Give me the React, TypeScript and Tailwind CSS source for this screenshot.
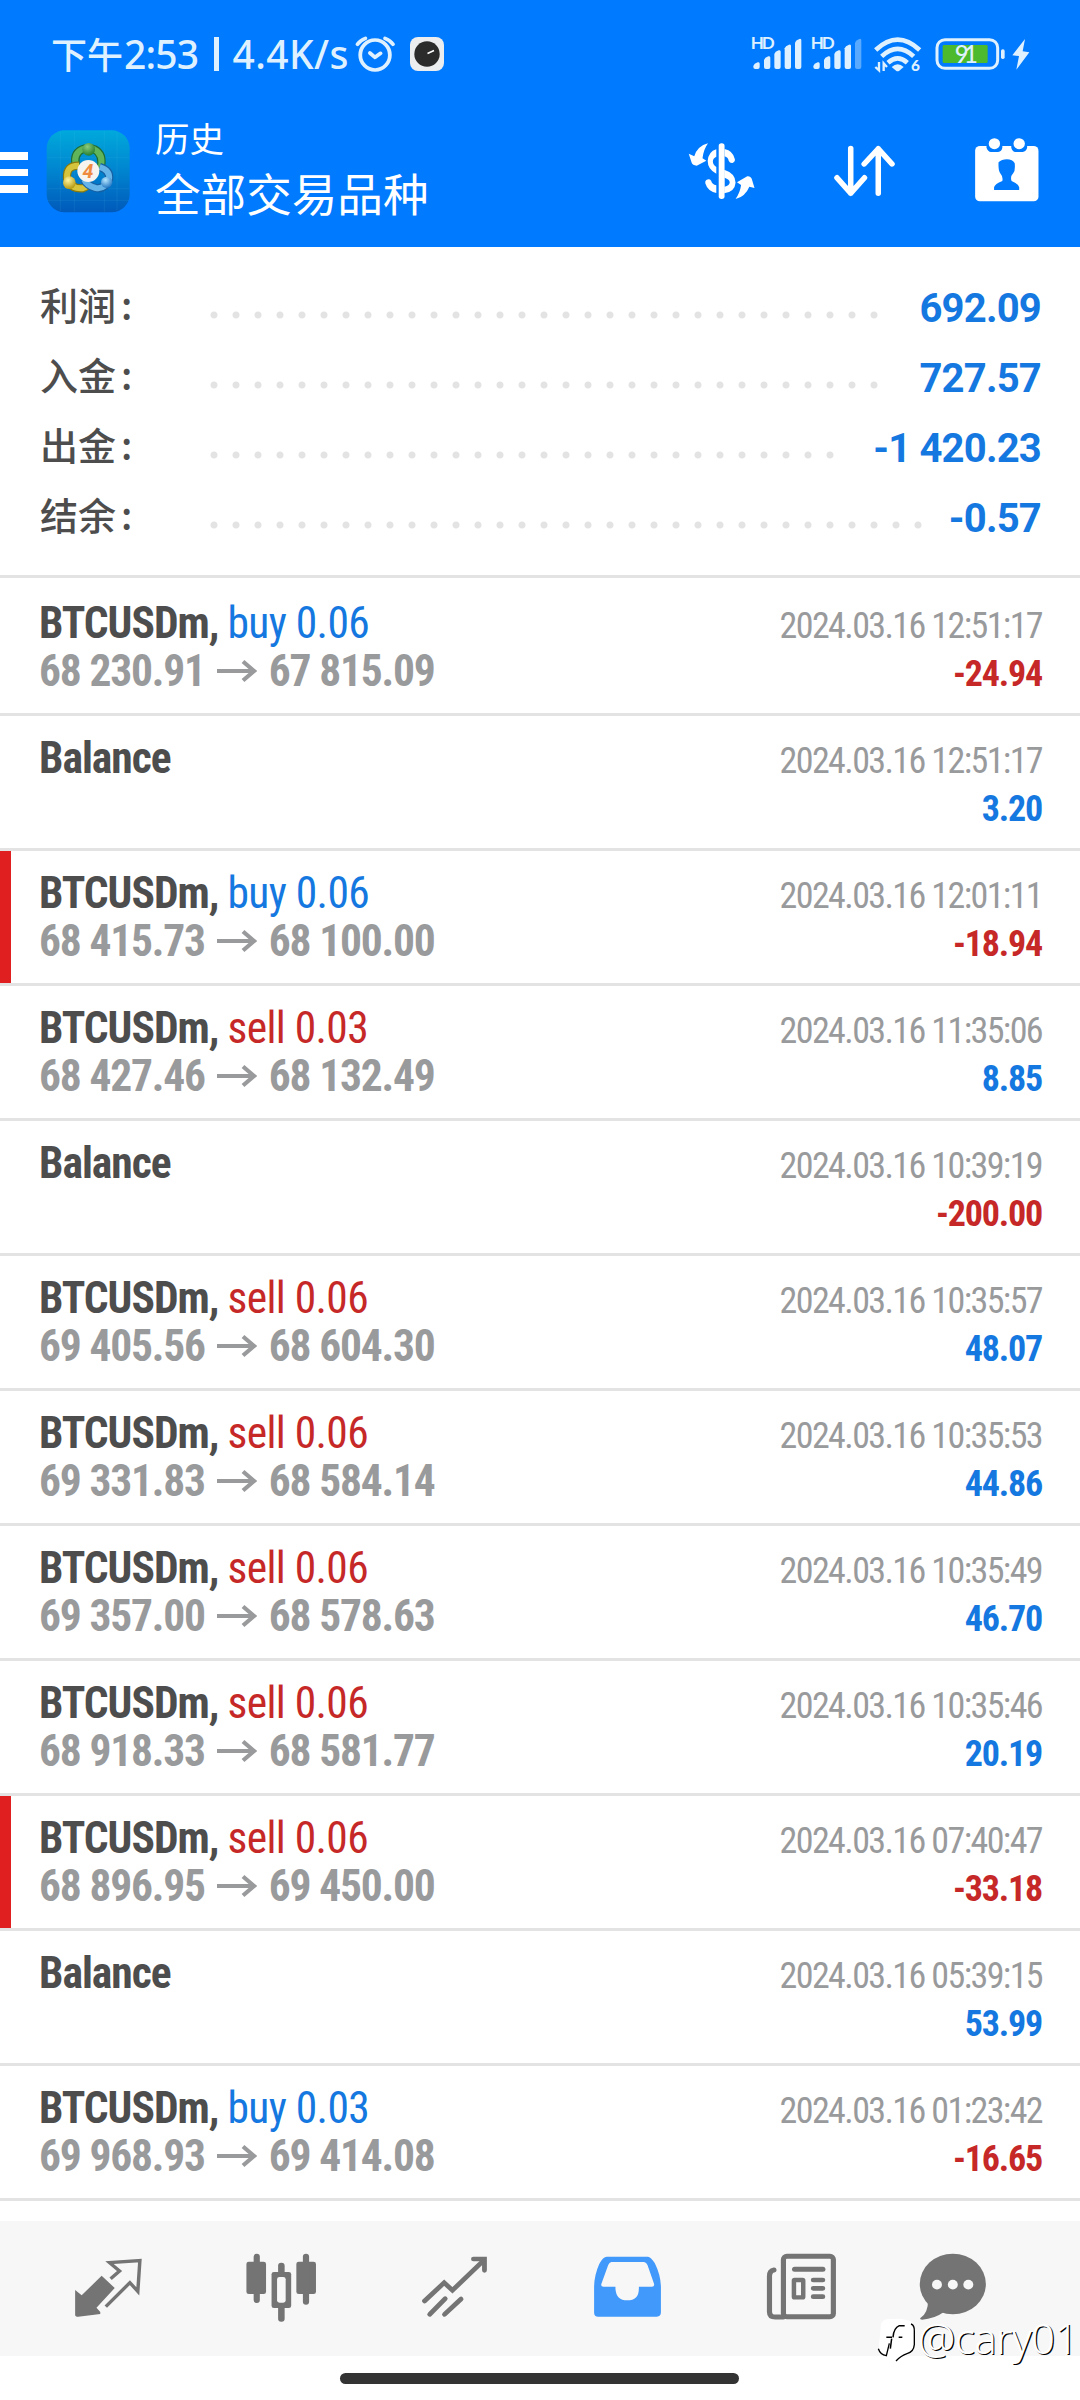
import React from 'react';

const summary = [
  { label: '利润', value: '692.09', dots: 'w-[682px]' },
  { label: '入金', value: '727.57', dots: 'w-[682px]' },
  { label: '出金', value: '-1 420.23', dots: 'w-[638px]' },
  { label: '结余', value: '-0.57', dots: 'w-[726px]' },
];

type Row = { side?: 'buy' | 'sell'; lot?: string; from?: string; to?: string; date: string; value: string; mark?: boolean; loss?: boolean };
const rows: Row[] = [
  { side: 'buy', lot: '0.06', from: '68 230.91', to: '67 815.09', date: '2024.03.16 12:51:17', value: '-24.94', loss: true },
  { date: '2024.03.16 12:51:17', value: '3.20' },
  { side: 'buy', lot: '0.06', from: '68 415.73', to: '68 100.00', date: '2024.03.16 12:01:11', value: '-18.94', mark: true, loss: true },
  { side: 'sell', lot: '0.03', from: '68 427.46', to: '68 132.49', date: '2024.03.16 11:35:06', value: '8.85' },
  { date: '2024.03.16 10:39:19', value: '-200.00', loss: true },
  { side: 'sell', lot: '0.06', from: '69 405.56', to: '68 604.30', date: '2024.03.16 10:35:57', value: '48.07' },
  { side: 'sell', lot: '0.06', from: '69 331.83', to: '68 584.14', date: '2024.03.16 10:35:53', value: '44.86' },
  { side: 'sell', lot: '0.06', from: '69 357.00', to: '68 578.63', date: '2024.03.16 10:35:49', value: '46.70' },
  { side: 'sell', lot: '0.06', from: '68 918.33', to: '68 581.77', date: '2024.03.16 10:35:46', value: '20.19' },
  { side: 'sell', lot: '0.06', from: '68 896.95', to: '69 450.00', date: '2024.03.16 07:40:47', value: '-33.18', mark: true, loss: true },
  { date: '2024.03.16 05:39:15', value: '53.99' },
  { side: 'buy', lot: '0.03', from: '69 968.93', to: '69 414.08', date: '2024.03.16 01:23:42', value: '-16.65', loss: true },
];

function Arrow() {
  return (
    <svg width="40" height="24" viewBox="0 0 40 24" className="-mt-[2px] mr-[12px] ml-[12px]" fill="none" stroke="#999a9c" strokeWidth="4.2">
      <path d="M0 12H37M26 2.5L37 12L26 21.5" />
    </svg>
  );
}

function Signal({ weak }: { weak?: boolean }) {
  const bars = [[42, 128], [74, 110], [105, 92], [136, 75], [167, 58]];
  return (
    <svg width="60" height="50" viewBox="32 30 180 150" fill="#dff1ff">
      <text x="34" y="91" fontSize="51" fontFamily="Lato, sans-serif" fontWeight="700" textLength="72">HD</text>
      {bars.map(([x, y], i) => (
        <path key={x} opacity={weak && i === 4 ? 0.4 : 1} d={`M${x} 144V${y + 13}Q${x + 2} ${y + 6} ${x + 13} ${y + 2}Q${x + 19} ${y} ${x + 19} ${y + 6}V144Q${x + 19} 150 ${x + 13} 150H${x + 6}Q${x} 150 ${x} 144Z`} />
      ))}
    </svg>
  );
}

function Wifi() {
  return (
    <svg width="60" height="50" viewBox="391 30 180 150" fill="none" stroke="#dff1ff" strokeWidth="14">
      <path d="M408 93Q474 31 540 93M426 112Q474 67 522 112M445 131Q474 105 503 131" />
      <path d="M456 144Q474 128 492 144L478 156Q474 158 470 156Z" fill="#dff1ff" stroke="none" />
      <path d="M418 129V154L407 144M432 156V133L442 144" strokeWidth="7" />
      <text x="514" y="157" fontSize="46" fontFamily="Lato, sans-serif" fontWeight="900" fill="#dff1ff" stroke="none">6</text>
    </svg>
  );
}

function Battery() {
  return (
    <svg width="100" height="40" viewBox="580 42 300 120" fill="#dff1ff">
      <rect x="592" y="59" width="182" height="86" rx="24" fill="none" stroke="#dff1ff" strokeWidth="9" />
      <rect x="609" y="75" width="135" height="54" rx="4" fill="#4cba2c" />
      <rect x="784" y="88" width="11" height="29" rx="5" />
      <text x="645" y="128" fontSize="72" fontFamily="Lato, sans-serif" fontWeight="500" textLength="70">91</text>
      <path d="M856 57L818 106L838 108L830 149L869 97L849 94Z" />
    </svg>
  );
}

function Alarm() {
  return (
    <svg width="44.8" height="40" viewBox="1026 100 130 120" preserveAspectRatio="none" fill="none" stroke="#dff1ff" strokeWidth="11" strokeLinecap="round" strokeLinejoin="round">
      <ellipse cx="1090" cy="163" rx="43" ry="45" />
      <path d="M1075 157L1090 170L1106 158" />
      <path d="M1039 131Q1047 119 1062 113M1142 131Q1134 119 1119 113" />
    </svg>
  );
}

function ClockApp() {
  return (
    <div className="ml-[12px] flex h-[34px] w-[34px] items-center justify-center rounded-[8px] bg-[#ecedee]">
      <svg width="26" height="26" viewBox="0 0 26 26">
        <circle cx="13" cy="13" r="12.7" fill="#2b2b2b" />
        <path d="M13.5 12.5L20 9.5" stroke="#fff" strokeWidth="1.5" />
      </svg>
    </div>
  );
}

function Logo() {
  return (
    <svg width="86" height="84" viewBox="134 56 258 252">
      <defs>
        <linearGradient id="sky" x1="0" y1="0" x2="0" y2="1">
          <stop offset="0" stopColor="#00a9dc" />
          <stop offset="0.5" stopColor="#0084cf" />
          <stop offset="1" stopColor="#0059ba" />
        </linearGradient>
        <radialGradient id="green" cx="0.4" cy="0.3" r="0.7"><stop offset="0" stopColor="#8ccb7c" /><stop offset="1" stopColor="#267f30" /></radialGradient>
        <radialGradient id="gold" cx="0.4" cy="0.3" r="0.7"><stop offset="0" stopColor="#fff6a0" /><stop offset="1" stopColor="#b69a11" /></radialGradient>
        <radialGradient id="azure" cx="0.4" cy="0.3" r="0.7"><stop offset="0" stopColor="#b5e6ff" /><stop offset="1" stopColor="#2478c4" /></radialGradient>
      </defs>
      <rect x="139" y="60" width="249" height="246" rx="54" fill="url(#sky)" />
      <path d="M222 62V304M180 64V302M312 62V304M350 66V300M141 142H386M141 235H386M141 270H386" stroke="#5cc7ee" strokeOpacity="0.22" strokeWidth="1.5" />
      <g fill="none">
        <path d="M230 176Q214 132 246 117Q264 110 282 117Q312 132 300 176" stroke="#1f6d33" strokeWidth="25" />
        <path d="M230 176Q214 132 246 117Q264 110 282 117Q312 132 300 176" stroke="#60b45a" strokeWidth="18" />
        <path d="M236 166Q198 164 200 203Q210 236 246 234Q262 230 268 218" stroke="#8a7a0d" strokeWidth="25" />
        <path d="M236 166Q198 164 200 203Q210 236 246 234Q262 230 268 218" stroke="#d6c43c" strokeWidth="18" />
        <path d="M298 170Q330 180 326 206Q314 238 286 233Q260 226 252 208" stroke="#1661a4" strokeWidth="25" />
        <path d="M298 170Q330 180 326 206Q314 238 286 233Q260 226 252 208" stroke="#66b4e8" strokeWidth="18" />
      </g>
      <circle cx="265" cy="117" r="19" fill="url(#green)" />
      <circle cx="207" cy="217" r="19" fill="url(#gold)" />
      <circle cx="319" cy="216" r="17" fill="url(#azure)" />
      <circle cx="264" cy="182" r="33" fill="#f7f3ee" />
      <text x="263" y="203" textAnchor="middle" fontSize="59" fontFamily="Roboto, sans-serif" fontStyle="italic" fontWeight="700" fill="#ee8b3f">4</text>
    </svg>
  );
}

function Icon({ x, y, s, w, h, className, children }: { x: number; y: number; s: number; w: number; h: number; className?: string; children: React.ReactNode }) {
  return (
    <svg width={w} height={h} viewBox={`${x} ${y} ${s} ${s}`} preserveAspectRatio="none" className={className}>
      {children}
    </svg>
  );
}

function Header() {
  return (
    <header className="h-[247px] bg-[#007aff] font-['Noto_Sans_CJK_SC',sans-serif] text-white">
      <div className="flex h-[95px] items-center pt-[13px] pl-[51px] text-[#dff1ff]">
        <div className="flex w-[302px] items-center text-[36px] leading-[40px] font-medium">
          <span className="w-[73px] pb-[3px]">下午</span>
          <span className="w-[84px] font-['Noto_Sans',sans-serif] text-[39px] tracking-[-0.8px]">2:53</span>
          <span className="mr-[7px] ml-[6px] h-[34px] w-[4.5px] bg-[#dff1ff]" />
          <span className="ml-[7px] font-['Noto_Sans',sans-serif] text-[39px] tracking-[0.4px]">4.4K/s</span>
        </div>
        <Alarm />
        <ClockApp />
        <div className="ml-[306px] flex">
          <Signal />
          <Signal weak />
          <Wifi />
        </div>
        <div className="ml-[3px]"><Battery /></div>
      </div>
      <div className="flex h-[152px] items-center">
        <div className="flex w-7 flex-col gap-[9px] pt-[3px]">
          <div className="h-[7.5px] bg-white" />
          <div className="h-[7.5px] bg-white" />
          <div className="h-[7.5px] bg-white" />
        </div>
        <div className="ml-[17px]"><Logo /></div>
        <div className="mb-[6px] ml-[24px] flex-1">
          <div className="text-[34.5px] leading-[48px]">历史</div>
          <div className="text-[45.6px] leading-[62px]">全部交易品种</div>
        </div>
        <div className="flex gap-[70px] pr-[37px]">
          <Icon x={425} y={408} s={210} w={72.3} h={70}>
            <g fill="#fff">
              <path d="M513 448V470Q503 475 503 484Q503 495 513 501V521Q488 508 488 483Q490 455 513 448Z" />
              <path d="M537 447Q562 452 567 478Q568 486 560 489Q552 490 549 482Q547 472 537 469Z" />
              <rect x="520" y="430" width="17" height="167" rx="8" />
              <path fillRule="evenodd" d="M536 509Q569 520 569 548Q567 575 536 580ZM537 533V560Q552 557 552 547Q552 538 537 533Z" />
              <path d="M513 579V556Q501 553 498 542Q493 535 484 540Q480 543 481 550Q488 574 513 579Z" />
              <path d="M489 430Q476 448 473 475L484 482L456 497Q444 497 441 487L433 461L449 469Q458 438 489 430Z" />
              <path d="M569 597Q582 578 585 555L573 547L603 529Q614 528 617 540L624 564L609 560Q597 590 569 597Z" />
            </g>
          </Icon>
          <Icon x={838} y={408} s={210} w={72.3} h={70}>
            <path d="M904 445V580M864 533L904 580L944 533M984 580V446M943 492L984 446L1024 492" fill="none" stroke="#fff" strokeWidth="16" strokeLinecap="round" strokeLinejoin="round" />
          </Icon>
          <Icon x={1251} y={408} s={210} w={72.3} h={70}>
            <rect x="1263" y="438" width="184" height="166" rx="14" fill="#fff" />
            <path d="M1296 430V443Q1300 455 1309 456H1330Q1340 454 1342 443V430ZM1368 430V443Q1371 455 1380 456H1401Q1411 454 1414 443V430Z" fill="#007aff" />
            <circle cx="1319" cy="431" r="16.5" fill="#fff" />
            <circle cx="1391" cy="431" r="16.5" fill="#fff" />
            <path d="M1318 570V562Q1320 552 1342 543Q1345 530 1335 518Q1330 510 1331 487Q1340 478 1355 478Q1372 478 1378 490Q1380 512 1374 519Q1364 530 1369 543Q1390 552 1391 562V570Z" fill="#007aff" />
          </Icon>
        </div>
      </div>
    </header>
  );
}

function NavBar() {
  return (
    <nav className="flex h-[135px] items-center gap-[99px] bg-[#f7f7f7] pb-[4px] pl-[71px]">
      <Icon x={207} y={214} s={216} w={74.4} h={72} className="shrink-0">
        <path d="M219 331L238 347L296 288L334 325L281 384L292 397V403L228 411Q219 411 219 405Z" fill="#747474" />
        <path d="M322 297L348 274L319 249L407 243L401 335L378 309L308 381" fill="none" stroke="#747474" strokeWidth="10" />
      </Icon>
      <Icon x={708} y={214} s={216} w={74.4} h={72} className="shrink-0">
        <g fill="#747474">
          <rect x="715" y="246" width="57" height="97" rx="7" />
          <rect x="736" y="222" width="18" height="148" rx="9" />
          <rect x="860" y="246" width="57" height="97" rx="7" />
          <rect x="879" y="222" width="18" height="153" rx="9" />
          <rect x="807" y="249" width="19" height="40" rx="9" />
          <rect x="807" y="372" width="19" height="54" rx="9" />
          <rect x="788" y="277" width="57" height="108" rx="7" />
          <rect x="804" y="292" width="25" height="77" rx="7" fill="#f7f7f7" />
        </g>
      </Icon>
      <Icon x={1212} y={214} s={216} w={74.4} h={72} className="shrink-0">
        <g fill="none" stroke="#747474" strokeWidth="14" strokeLinecap="round">
          <path d="M1231 364L1288 309L1312 332L1402 243" />
          <path d="M1373 238H1405V272" />
          <path d="M1246 404L1291 357M1289 404L1337 358" />
        </g>
      </Icon>
      <Icon x={148} y={214} s={216} w={74.4} h={72} className="shrink-0">
        <path fillRule="evenodd" fill="#4199fb" d="M194 231H313Q322 232 333 250Q350 285 351 320V398Q351 411 339 411H169Q157 411 157 399V320Q158 285 172 253Q183 231 194 231ZM207 247Q201 248 198 256L178 313Q176 321 184 321H219V327Q221 362 253 362Q287 362 287 327V321H325Q333 320 331 312L312 256Q309 248 302 247Z" />
      </Icon>
      <Icon x={652} y={214} s={216} w={74.4} h={72} className="shrink-0">
        <g fill="none" stroke="#747474" strokeWidth="15" strokeLinecap="round">
          <rect x="705.5" y="229.5" width="145" height="182" rx="10" />
          <path d="M678 271Q665 273 665 290V396Q665 412 682 412H705" />
          <path d="M738 269H820" />
          <rect x="736" y="301" width="27" height="52" rx="2" strokeWidth="13" />
          <path d="M792 301H820M792 326H820M792 351H820" strokeWidth="14" />
        </g>
      </Icon>
      <Icon x={1095} y={214} s={216} w={74.4} h={72} className="-ml-[21px] shrink-0">
        <path d="M1127 360Q1128 400 1104 416Q1103 420 1110 420Q1145 418 1172 398Z" fill="#747474" />
        <ellipse cx="1199" cy="313" rx="96" ry="91" fill="#747474" />
        <circle cx="1153" cy="315" r="14.5" fill="#f7f7f7" />
        <circle cx="1199" cy="315" r="14.5" fill="#f7f7f7" />
        <circle cx="1244" cy="315" r="14.5" fill="#f7f7f7" />
      </Icon>
    </nav>
  );
}

function Watermark() {
  return (
    <div className="absolute top-[2314px] left-[876px] flex h-[50px] items-center">
      <svg width="42" height="50" viewBox="45 288 126 150" fill="none">
        <path d="M60 318Q66 303 85 303L120 302L150 310Q161 318 161 335V380Q160 405 135 407L108 425L72 415Q53 400 54 380Z" fill="#fff" />
        <path d="M150 318Q161 322 160 340V380Q158 402 138 407Q120 413 105 429M52 392Q58 410 76 413L85 376" stroke="#000" strokeWidth="4" />
        <path d="M131 323H115Q98 330 96 358M76 358H93M113 358H124M92 362L88 392" stroke="#000" strokeWidth="4.5" />
      </svg>
      <span className="pb-[2px] font-['Noto_Sans',sans-serif] text-[42px] leading-[50px] font-light tracking-[-0.6px] text-white [text-shadow:1.2px_0.8px_0_#000]">@cary01</span>
    </div>
  );
}

export default function App() {
  return (
    <div className="relative flex h-[2400px] w-[1080px] flex-col overflow-hidden bg-white">
      <Header />
      <section className="flex h-[331px] flex-col border-b-[3px] border-[#e3e3e3] pt-[25px] pr-[39px] pl-10">
        {summary.map((s) => (
          <div key={s.label} className="flex h-[70px] items-center">
            <div className="flex w-[162.5px] pb-[6px] font-['Noto_Sans_CJK_SC',sans-serif] text-[38px] leading-[56px] font-medium text-[#4d4d4d]">
              {s.label}<span className="ml-[5px]">:</span>
            </div>
            <div className={`mt-[15px] h-[22px] bg-[radial-gradient(circle,#e3e3e3_3px,transparent_4px)] bg-[length:22px_22px] ${s.dots}`} />
            <div className="ml-auto pt-[3px] font-[Roboto] text-[40px] leading-[48px] font-bold tracking-[-0.8px] whitespace-nowrap text-[#1478e0]">{s.value}</div>
          </div>
        ))}
      </section>
      <main className="flex flex-col pt-[3px] font-[Roboto] [font-stretch:75%]">
        {rows.map((r) => (
          <article key={r.date + r.value} className="flex h-[135px] border-b-[3px] border-[#e3e3e3]">
            <div className={r.mark ? 'w-[11px] bg-[#e02020]' : 'w-[11px]'} />
            <div className="flex flex-1 justify-between pt-[19px] pr-[38px] pl-[28px]">
              <div className="text-[43.5px] leading-[48px] font-bold tracking-[-1px] text-[#4d4d4d]">
                {r.side ? (
                  <>
                    <div>
                      BTCUSDm,{' '}
                      <span className={r.side === 'buy' ? 'font-normal tracking-[-0.6px] text-[#1478e0]' : 'font-normal tracking-[-0.6px] text-[#c62828]'}>
                        {r.side} {r.lot}
                      </span>
                    </div>
                    <div className="flex items-center tracking-[-1.2px] text-[#999a9c]">
                      {r.from}
                      <Arrow />
                      {r.to}
                    </div>
                  </>
                ) : (
                  'Balance'
                )}
              </div>
              <div className="pt-[2px] text-right text-[36px] leading-[48px]">
                <div className="tracking-[-1.6px] text-[#999a9c]">{r.date}</div>
                <div className={r.loss ? 'font-bold tracking-[-1.2px] text-[#c62828]' : 'font-bold tracking-[-1.2px] text-[#1478e0]'}>{r.value}</div>
              </div>
            </div>
          </article>
        ))}
      </main>
      <div className="mt-5">
        <NavBar />
      </div>
      <div className="mt-[17px] ml-[340px] h-[10.5px] w-[399px] rounded-full bg-[#333]" />
      <Watermark />
    </div>
  );
}
